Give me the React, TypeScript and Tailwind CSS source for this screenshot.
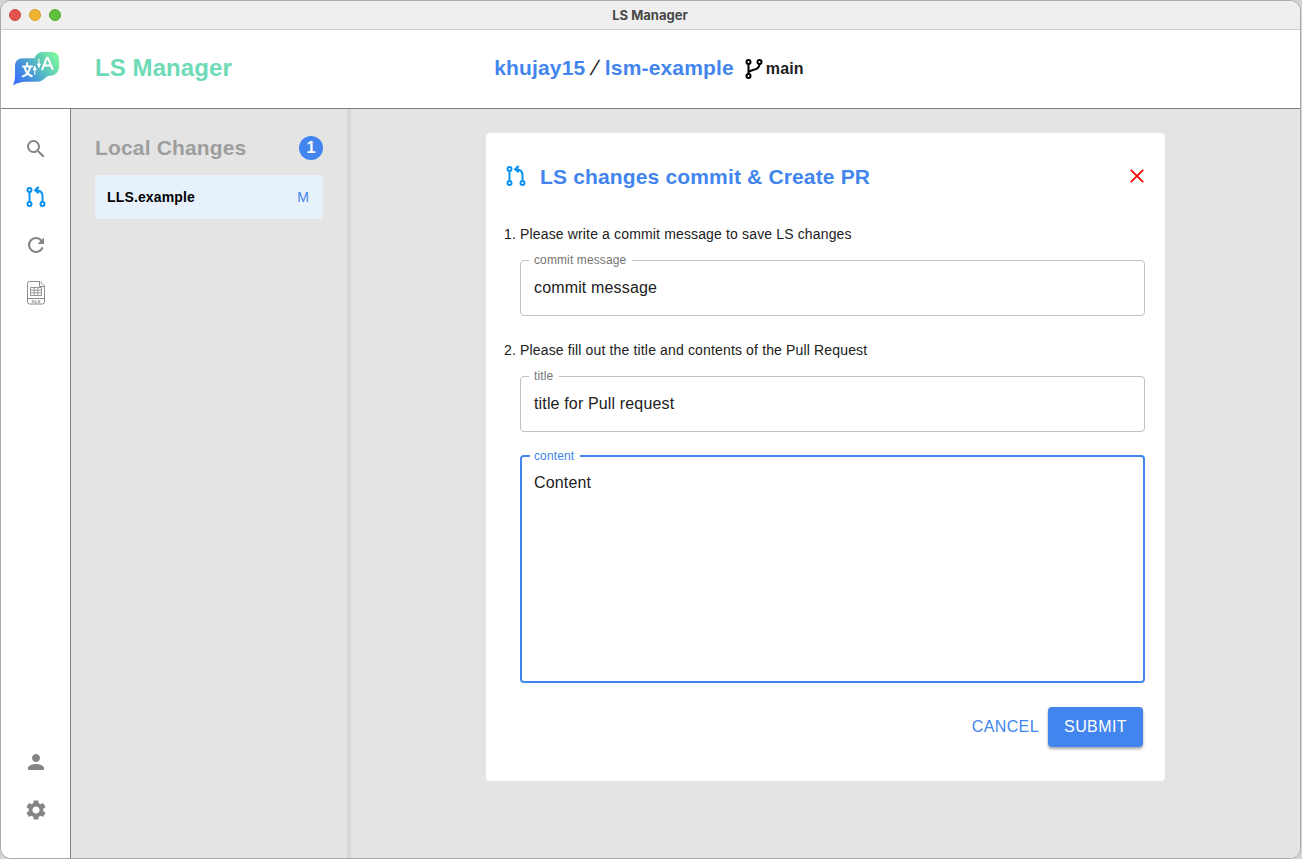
import React from "react";
import { MdSearch, MdPerson, MdSettings } from "react-icons/md";

function Logo() {
  return (
    <svg width="48" height="36" viewBox="0 0 48 36" className="block">
      <defs>
        <linearGradient id="logoFill" gradientUnits="userSpaceOnUse" x1="3" y1="34" x2="46" y2="4">
          <stop offset="0" stopColor="#3b6bff" />
          <stop offset="0.35" stopColor="#4796da" />
          <stop offset="0.65" stopColor="#5bc8ba" />
          <stop offset="1" stopColor="#82fa9c" />
        </linearGradient>
      </defs>
      <path
        d="M31 1h8.500c5 0 7.700 3 7.700 8v5.500c0 6.500-3.500 10-9 10.300-2.500 0-4 1.200-5.500 2.700-2.500 2.500-4.500 3.300-8 3.300H14C9 30.800 5 32.300 1 34.200c1.700-3.500 2-6.700 2-11.200v-7.500C3 10 6 7.300 11 7.300h11.500C24 3 27 1 31 1z"
        fill="url(#logoFill)"
      />
      <g fill="none" stroke="#fff" strokeWidth="2" strokeLinecap="round" strokeLinejoin="round">
        <path d="M15.200 12.200v3M11 15.400h9M12.500 15.800c.8 4.200 3.200 7.800 7.300 9.400M18 15.800c-.6 4.500-3 8-7.200 9.600" />
        <path d="M30.200 18.400L35 6.700h.8L40.600 18M32 14.400h6.500" />
      </g>
      <g stroke="#fff" fill="#fff" strokeWidth="1.300" strokeLinecap="round">
        <path d="M22.800 23.500v-6M22.800 15.600l-1.300 3h2.600z" strokeWidth="1.100" />
        <path d="M26.900 8v6M26.900 16.300l-1.300-3h2.600z" strokeWidth="1.100" />
      </g>
    </svg>
  );
}

function PullRequestIcon() {
  return (
    <svg width="20" height="22" viewBox="0 0 20 22" fill="none" stroke="#0a92f2" className="block">
      <g strokeWidth="2">
        <circle cx="3.500" cy="4" r="2" />
        <circle cx="3.500" cy="18" r="2" />
        <circle cx="16.500" cy="18" r="2" />
        <path d="M3.500 6v10M16.500 16V9.800C16.500 6 14.300 4.300 10 4.200" />
      </g>
      <path d="M12.600 1L9.400 4.200l3.400 3" strokeWidth="2.400" />
    </svg>
  );
}

function BranchIcon() {
  return (
    <svg width="18" height="22" viewBox="0 0 18 22" fill="none" stroke="#000" strokeWidth="2" className="block">
      <circle cx="3.500" cy="4" r="2" />
      <circle cx="3.500" cy="18" r="2" />
      <circle cx="14.500" cy="4" r="2" />
      <path d="M3.500 6v10M14.500 6c0 3.200-1.500 4.600-4.500 5.400C7 12.200 5 12.500 3.800 14" />
    </svg>
  );
}

function ReloadIcon() {
  return (
    <svg width="24" height="24" viewBox="0 0 24 24" className="block">
      <path d="M18.600 14.400a7 7 0 1 1-.9-6.500" fill="none" stroke="#858585" strokeWidth="2.100" />
      <path d="M20 4.600v6.400h-6.400l2.300-2.400 2.200-2.200z" fill="#858585" />
    </svg>
  );
}

function XlsIcon() {
  return (
    <svg width="20" height="24" viewBox="0 0 20 24" fill="none" stroke="#8c8c8c" className="block">
      <path d="M1.500 18V2.500q0-2 2-2h10.500l4.500 4.500V18M13.500.8v4.700h5" strokeWidth="1" />
      <path d="M1.500 17.500h17v3.500q0 2-2 2h-13q-2 0-2-2z" strokeWidth="1" />
      <path d="M4.500 6.500h11v8h-11zM4.500 9.200h11M4.500 11.800h11M8.200 6.500v8M11.800 6.500v8" strokeWidth="0.900" />
      <text x="10.200" y="22" textAnchor="middle" fill="#808080" stroke="none" fontSize="4" fontWeight="700" letterSpacing="0.400" fontFamily="Liberation Sans, sans-serif">XLS</text>
    </svg>
  );
}

function CloseIcon() {
  return (
    <svg width="14" height="14" viewBox="0 0 14 14" stroke="#f40808" strokeWidth="1.800" className="block">
      <path d="M.8.8l12.400 12.400M13.200.8L.8 13.200" />
    </svg>
  );
}

function Field({ label, value }: { label: string; value: string }) {
  return (
    <fieldset className="-mt-[7px] h-[63px] rounded-[4px] border border-[#c0c0c0] pr-3 pl-2">
      <legend className="pr-[6px] pl-[5px] text-[12px] leading-[14px] tracking-[0.113px] text-[#757575]">{label}</legend>
      <div className="pt-[9px] pl-[5px] text-[16px] leading-[23px] tracking-[0.15px] text-[#212121]">{value}</div>
    </fieldset>
  );
}

export default function App() {
  return (
    <div className="h-[859px] w-[1302px] bg-[#d3d3d3] pr-px font-['Liberation_Sans',Arial,sans-serif]">
      <div className="flex h-[859px] w-[1301px] flex-col overflow-hidden rounded-[11px] border border-[#a9a9a9] bg-white">
        <div className="grid h-[29px] shrink-0 grid-cols-[1fr_auto_1fr] items-center border-b border-[#cfcfcf] bg-[#efefef]">
          <div className="flex gap-2 pl-2">
            <span className="size-3 rounded-full border border-[#c94a43] bg-[#e2544d]" />
            <span className="size-3 rounded-full border border-[#d49c2b] bg-[#f0b431]" />
            <span className="size-3 rounded-full border border-[#52a832] bg-[#62c13c]" />
          </div>
          <div className="pr-px pb-px font-['Inter',sans-serif] text-[13px] leading-4 font-bold text-[#484848]">LS Manager</div>
          <div />
        </div>

        <header className="grid h-[79px] shrink-0 grid-cols-[1fr_auto_1fr] items-center border-b border-[#808080]">
          <div className="flex items-center pl-[11px]">
            <Logo />
            <h1 className="pb-[2px] pl-[35px] text-[24px] leading-8 font-bold tracking-[0.08px] text-[#6edab6]">LS Manager</h1>
          </div>
          <div className="flex items-center pr-[3px] pb-[2px] text-[21px] leading-8 font-bold tracking-[0.158px] text-[#4285ee]">
            <span>khujay15</span>
            <span className="w-[19.500px] -skew-x-[18deg] text-center font-normal text-[#212121]">/</span>
            <span>lsm-example</span>
            <span className="pt-[2px] pl-[11px]">
              <BranchIcon />
            </span>
            <span className="pt-[2px] pl-[3px] text-[16px] text-[#212121]">main</span>
          </div>
          <div />
        </header>

        <div className="flex min-h-0 flex-1">
          <nav className="flex w-[70px] shrink-0 flex-col items-center border-r border-[#808080] bg-white pt-[28px] pb-[36px] text-[#858585]">
            <div className="flex flex-col items-center gap-6">
              <MdSearch size={24} />
              <div className="flex h-6 items-center">
                <PullRequestIcon />
              </div>
              <ReloadIcon />
              <XlsIcon />
            </div>
            <div className="mt-auto flex flex-col items-center gap-6">
              <MdPerson size={24} />
              <MdSettings size={24} />
            </div>
          </nav>

          <aside className="w-[280px] shrink-0 border-r-4 border-[#d6d6d6] bg-[#e4e4e4] px-6 pt-[23px]">
            <div className="flex h-8 items-center justify-between">
              <h2 className="text-[21px] leading-8 font-bold tracking-[0.158px] text-[#9e9e9e]">Local Changes</h2>
              <span className="flex size-6 items-center justify-center rounded-full bg-[#4285ee] text-[16px] font-bold text-white">1</span>
            </div>
            <div className="mt-[11px] flex h-11 items-center justify-between rounded-[4px] bg-[#e7f1fc] pr-[14px] pl-3 text-[14px] leading-5 tracking-[0.15px]">
              <span className="font-bold text-black">LLS.example</span>
              <span className="text-[#4285ee]">M</span>
            </div>
          </aside>

          <main className="flex min-w-0 flex-1 justify-center bg-[#e4e4e4] pt-6">
            <section className="h-[648px] w-[679px] rounded-[4px] bg-white pr-5 pl-[18px] text-[#212121]">
              <div className="flex items-center pt-[27px]">
                <span className="pl-[2px]">
                  <PullRequestIcon />
                </span>
                <h2 className="pt-px pl-[14px] text-[21px] leading-[31px] font-bold tracking-[0.158px] text-[#4285ee]">LS changes commit &amp; Create PR</h2>
                <button className="mr-[1px] ml-auto" aria-label="Close">
                  <CloseIcon />
                </button>
              </div>

              <p className="mt-[32px] text-[14px] leading-5 tracking-[0.15px]">1. Please write a commit message to save LS changes</p>
              <div className="mt-4 pl-4">
                <Field label="commit message" value="commit message" />
              </div>

              <p className="mt-6 text-[14px] leading-5 tracking-[0.15px]">2. Please fill out the title and contents of the Pull Request</p>
              <div className="mt-4 pl-4">
                <Field label="title" value="title for Pull request" />
                <fieldset className="mt-[17px] h-[234px] rounded-[4px] border-2 border-[#4285ee] pr-3 pl-2">
                  <legend className="pr-[6px] pl-1 text-[12px] leading-[14px] tracking-[0.113px] text-[#4285ee]">content</legend>
                  <div className="pt-2 pl-1 text-[16px] leading-[23px] tracking-[0.15px]">Content</div>
                </fieldset>
              </div>

              <div className="mt-6 mr-[2px] flex justify-end text-[16px] leading-10 tracking-[0.4px]">
                <button className="pr-[9px] pl-2 text-[#4285ee]">CANCEL</button>
                <button className="h-10 w-[95px] rounded-[4px] bg-[#4285ee] text-white shadow-[0_2px_3px_rgba(0,0,0,0.35)]">SUBMIT</button>
              </div>
            </section>
          </main>
        </div>
      </div>
    </div>
  );
}
